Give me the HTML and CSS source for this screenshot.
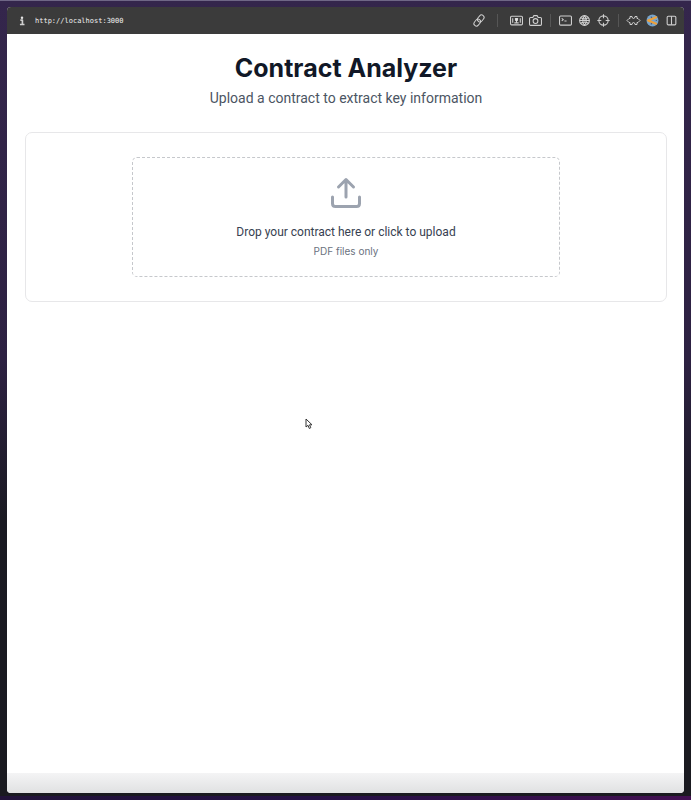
FILE: index.html
```html
<!DOCTYPE html>
<html lang="en">
<head>
<meta charset="utf-8">
<meta name="viewport" content="width=device-width, initial-scale=1">
<title>Contract Analyzer</title>
<link rel="stylesheet" href="styles.css">
</head>
<body>
<div class="window">
  <header class="toolbar">
    <button class="tool info" type="button" aria-label="Site information"><svg viewBox="0 0 12 12"><path d="M4 5h2.500v5M3.500 10.200h5.500" stroke-width="2"/><circle class="solid" cx="6" cy="2" r="1.500"/></svg></button>
    <input class="address" type="text" aria-label="Address" value="http://localhost:3000">
    <div class="tools">
      <button class="tool link" type="button" aria-label="Copy link"><svg viewBox="0 0 12 12"><g transform="rotate(-50 6 6)"><rect x="-.5" y="3.500" width="7.500" height="5" rx="2.500"/><rect x="5" y="3.500" width="7.500" height="5" rx="2.500"/></g></svg></button>
      <span class="divider"></span>
      <button class="tool" type="button" aria-label="Capture area"><svg viewBox="0 0 12 12"><rect x=".5" y="2" width="11" height="8" rx="1"/><path d="M2.500 4v4M9.500 4v4M4 8.200h4M4.500 4.300h3M6 6v2"/><circle class="solid" cx="6" cy="5.200" r="1.400"/></svg></button>
      <button class="tool" type="button" aria-label="Take screenshot"><svg viewBox="0 0 12 12"><path d="M1.500 3.200h2L4.500 1.500h3l1 1.700h2q1 0 1 1v5.300q0 1-1 1h-9q-1 0-1-1V4.200q0-1 1-1z"/><circle cx="6" cy="6.500" r="2.200"/></svg></button>
      <span class="divider"></span>
      <button class="tool" type="button" aria-label="Console"><svg viewBox="0 0 12 12"><rect x=".5" y="1.800" width="11" height="8.500" rx="1"/><path d="M2.500 4l1.500 1.200-1.500 1.200M5 6.500h2"/></svg></button>
      <button class="tool" type="button" aria-label="Network"><svg viewBox="0 0 12 12"><circle cx="6" cy="6" r="4.500"/><path d="M1.500 6h9M6 1.500Q2.500 6 6 10.500M6 1.500Q9.500 6 6 10.500M2.500 3.500q3.500 2 7 0M2.500 8.500q3.500-2 7 0"/></svg></button>
      <button class="tool" type="button" aria-label="Inspect element"><svg viewBox="0 0 12 12"><circle cx="6" cy="6" r="4.300"/><path d="M6 .3v3.700M6 8v3.700M.3 6H4M8 6h3.700"/></svg></button>
      <span class="divider"></span>
      <button class="tool" type="button" aria-label="Extensions"><svg viewBox="0.500 0 13 12"><path d="M3.500 2H5.500q0 2 1.500 2t1.500-2H10.500v2h1l2 2-2 2h-1v2H8.500Q8.500 8 7 8T5.500 10H3.500V8h-1l-2-2 2-2h1z"/></svg></button>
      <button class="tool" type="button" aria-label="Extension"><svg viewBox="0 0 12 12"><circle class="badge" cx="6" cy="6" r="5.500"/><path class="mark" d="M10 2.700L2 6l8 3.300"/><path class="mark-dark" d="M4.500 2.500l1 1M4.500 9.500l1-1M9 6h1"/></svg></button>
      <button class="tool" type="button" aria-label="Split view"><svg viewBox="0 0 12 12"><rect x="2" y="2" width="8" height="8" rx="1"/><path d="M6 2v8"/></svg></button>
    </div>
  </header>
  <main class="page">
    <h1>Contract Analyzer</h1>
    <p class="subtitle">Upload a contract to extract key information</p>
    <section class="card">
      <label class="dropzone">
        <input class="file" type="file" accept="application/pdf">
        <svg class="upload" viewBox="0 0 32 32" aria-hidden="true"><path d="M16 20V2.500M8.500 10L16 2.500l7.500 7.500M2.500 20v6.500q0 3 3 3h21q3 0 3-3V20"/></svg>
        <span class="prompt">Drop your contract here or click to upload</span>
        <span class="hint">PDF files only</span>
      </label>
    </section>
  </main>
  <footer class="shade"></footer>
</div>
<svg class="pointer" viewBox="0 0 8 12" aria-hidden="true"><path d="M1 1v8l2-1.700L4.300 10.500l1.500-.8L4.500 6.800H7z"/></svg>
</body>
</html>
```
FILE: styles.css
```css
* { box-sizing: border-box; }

body {
  margin: 0;
  min-height: 100vh;
  display: flex;
  padding: 7px;
  font-family: Inter, "Liberation Sans", sans-serif;
  background:
    linear-gradient(#6f6786, #6f6786) top / 100% 1px no-repeat,
    linear-gradient(90deg, #221339, #241144 45%, #431052) bottom / 100% 4px no-repeat,
    linear-gradient(#34264c, #2d2142 45%, #1a1a22 65%, #1a1a20);
}

.window {
  flex: 1;
  min-width: 0;
  display: flex;
  flex-direction: column;
  overflow: hidden;
  border-radius: 4px;
  background: #fff;
}

.toolbar {
  height: 27px;
  display: flex;
  align-items: center;
  padding: 0 6px 0 9px;
  background: #3b3b3b;
}

.tool {
  width: 13px;
  height: 13px;
  padding: 0;
  border: 0;
  background: none;
}

.tool svg {
  display: block;
  width: 100%;
  height: 100%;
  overflow: visible;
  fill: none;
  stroke: #cfcfcf;
  stroke-width: 1;
  stroke-linejoin: round;
}

.info { width: 12px; height: 10px; }
.link { width: 12px; }
.tool .solid { fill: #e4e4e4; stroke: none; }
.tool .badge { fill: #78a5cc; stroke: none; }
.tool .mark { stroke: #eea03a; stroke-width: 2; }
.tool .mark-dark { stroke: #4d5b72; }

.address {
  flex: 1;
  min-width: 0;
  margin: 0 7px;
  padding: 0;
  border: 0;
  outline: 0;
  background: none;
  color: #f0f0f0;
  font: 7px "DejaVu Sans Mono", monospace;
}

.tools {
  display: flex;
  align-items: center;
  gap: 6px;
}

.divider {
  width: 1px;
  height: 13px;
  margin: 0 2px;
  background: #565656;
}

.link + .divider { margin: 0 6px; }

.page {
  flex: 1;
  padding: 16px 17px 16px 18px;
  text-align: center;
}

h1 {
  margin: 0;
  color: #111827;
  font-size: 25px;
  line-height: 36px;
  font-weight: 700;
}

.subtitle {
  margin: 2px 0 24px;
  color: #4b5563;
  font-family: Roboto, "Liberation Sans", sans-serif;
  font-size: 14px;
  line-height: 20px;
}

.card {
  padding: 24px;
  border: 1px solid #e7e7e9;
  border-radius: 7px;
}

.dropzone {
  display: flex;
  flex-direction: column;
  align-items: center;
  max-width: 428px;
  margin: 0 auto;
  padding: 19px 20px 18px;
  border: 1px dashed #c6c8cc;
  border-radius: 5px;
}

.file {
  position: absolute;
  width: 1px;
  height: 1px;
  opacity: 0;
}

.upload {
  width: 32px;
  height: 32px;
  fill: none;
  stroke: #9ca3af;
  stroke-width: 3;
  stroke-linecap: round;
  stroke-linejoin: round;
}

.prompt {
  margin-top: 14px;
  color: #374151;
  font-family: Roboto, "Liberation Sans", sans-serif;
  font-size: 12px;
  line-height: 18px;
}

.hint {
  margin-top: 3px;
  color: #6b7280;
  font-size: 10px;
  line-height: 14px;
}

.shade {
  height: 20px;
  background: linear-gradient(#f4f4f5, #e0e1e2);
}

.pointer {
  position: absolute;
  left: 305px;
  top: 418px;
  width: 8px;
  height: 12px;
  fill: #fff;
  stroke: #333;
  stroke-width: 1;
}
```
